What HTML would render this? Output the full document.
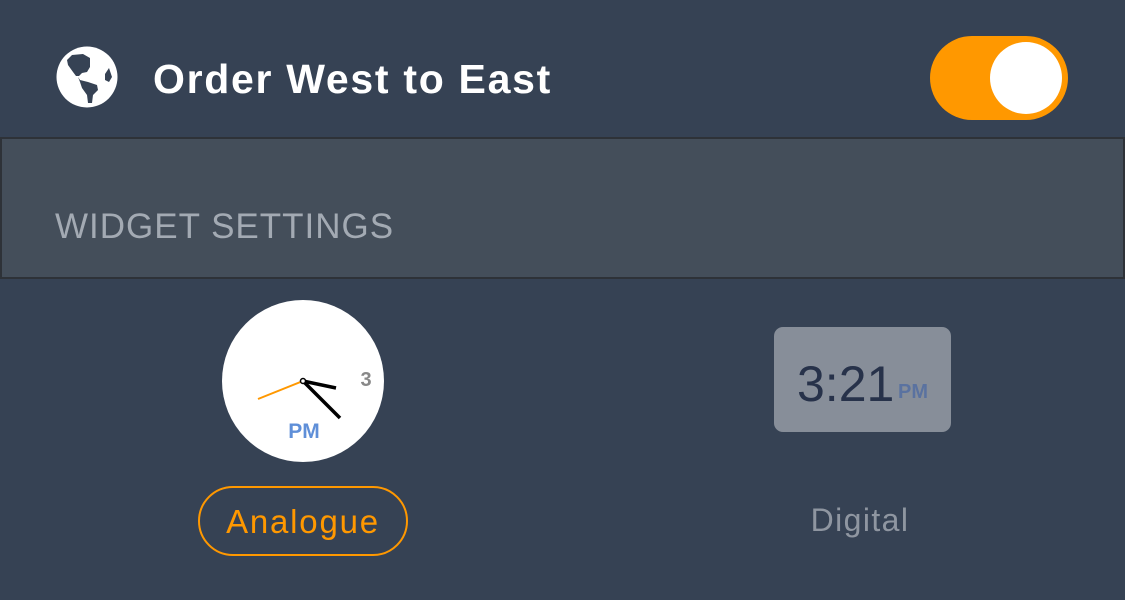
<!DOCTYPE html>
<html><head><style>
body{margin:0;width:1125px;height:600px;background:#364254;font-family:"Liberation Sans",sans-serif;position:relative;overflow:hidden}
.a{position:absolute}
</style></head><body>
<svg class="a" style="left:40px;top:30px" width="100" height="100" viewBox="0 0 100 100">
<circle cx="47" cy="47" r="30.5" fill="#fff"/>
<path fill="#364254" d="M32 25 L43 24 L50 28 L50 37 L47 42 L42 43 L39 46 L36 46 L33 42 L28 35 L27 30 Z"/>
<path fill="#364254" d="M38 47 L40 50 L48 52 L57 55 L58 60 L53 65 L52 73 L48 73 L47 65 L42 58 L40 52 Z"/>
<path fill="#364254" d="M65 44 L69 38 L72 47 L69 52 L65 50 Z"/>
</svg>
<div class="a" style="left:153px;top:56px;font-size:41px;font-weight:bold;color:#fff;letter-spacing:1.7px">Order West to East</div>
<div class="a" style="left:930px;top:36px;width:138px;height:84px;border-radius:42px;background:#ff9800"></div>
<div class="a" style="left:990px;top:42px;width:72px;height:72px;border-radius:50%;background:#fff"></div>
<div class="a" style="left:0;top:137px;width:1121px;height:138px;background:#444e5a;border:2px solid #2e3238"></div>
<div class="a" style="left:55px;top:207px;font-size:35px;color:#a3aab3;letter-spacing:1px">WIDGET SETTINGS</div>
<svg class="a" style="left:0;top:0" width="1125" height="600">
<circle cx="303" cy="381" r="81" fill="#fff"/>
<line x1="303" y1="381" x2="258" y2="399" stroke="#ff9800" stroke-width="2"/>
<line x1="303" y1="381" x2="336" y2="388" stroke="#000" stroke-width="3.5"/>
<line x1="303" y1="381" x2="340" y2="418" stroke="#000" stroke-width="3.5"/>
<circle cx="303" cy="381" r="2.5" fill="#fff" stroke="#000" stroke-width="1.5"/>
<text x="366" y="386" font-size="20" font-weight="bold" fill="#888" text-anchor="middle" font-family="Liberation Sans">3</text>
<text x="304" y="438" font-size="21" font-weight="bold" fill="#5f8fd8" text-anchor="middle" font-family="Liberation Sans">PM</text>
</svg>
<div class="a" style="left:198px;top:486px;width:206px;height:66px;border:2px solid #ff9800;border-radius:36px;color:#ff9800;font-size:33px;text-align:center;line-height:68px;letter-spacing:1.8px">Analogue</div>
<div class="a" style="left:774px;top:327px;width:177px;height:105px;border-radius:9px;background:#878e99"></div>
<div class="a" style="left:797px;top:355px;font-size:50px;color:#27324a">3:21</div>
<div class="a" style="left:898px;top:381px;font-size:20px;font-weight:bold;color:#5a72a0">PM</div>
<div class="a" style="left:760px;top:502px;width:200px;text-align:center;font-size:32px;color:#8f96a1;letter-spacing:1.4px">Digital</div>
</body></html>
